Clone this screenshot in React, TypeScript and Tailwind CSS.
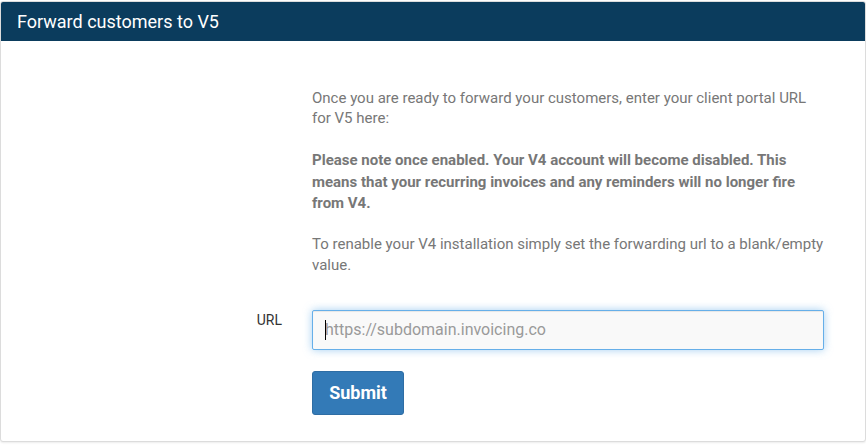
export default function App() {
  return (
    <div className="w-[866px] h-[446px] bg-white pt-[1px]" style={{ fontFamily: 'Roboto, "Liberation Sans", sans-serif' }}>
      <div className="h-[441px] border border-[#dcdcdc] rounded-[3px] shadow-[0_1px_2px_rgba(0,0,0,0.08)] bg-white flex flex-col overflow-hidden">
        <div className="bg-[#0b3c5d] text-white text-[18px] leading-[21px] py-[9px] pl-[16px]">
          Forward customers to V5
        </div>
        <div className="pt-[47px]">
          <div className="ml-[311px] w-[513px] text-[15px] text-[#777777]">
            <p className="leading-[20px]">
              Once you are ready to forward your customers, enter your client portal URL for V5 here:
            </p>
            <p className="leading-[21.5px] font-bold mt-[22px]">
              Please note once enabled. Your V4 account will become disabled. This means that your recurring invoices and any reminders will no longer fire from V4.
            </p>
            <p className="leading-[21.5px] mt-[19px]">
              To renable your V4 installation simply set the forwarding url to a blank/empty value.
            </p>
          </div>
          <div className="flex items-start mt-[33px]">
            <div className="w-[281px] text-right text-[14px] leading-[20px] text-[#333333]">URL</div>
            <div className="ml-[30px] w-[512px]">
              <div className="relative">
                <input
                  type="text"
                  placeholder="https://subdomain.invoicing.co"
                  className="w-full h-[40px] bg-[#f9f9f9] border border-[#66afe9] rounded-[2px] pl-[12px] text-[16px] text-[#555] placeholder:text-[#9a9a9a] outline-none shadow-[inset_0_1px_1px_rgba(0,0,0,0.075),0_0_8px_rgba(102,175,233,0.6)]"
                />
                <span className="absolute left-[13px] top-[10px] w-[1px] h-[20px] bg-black" />
              </div>
              <button className="mt-[21px] w-[92px] h-[44px] bg-[#337ab7] border border-[#2e6da4] rounded-[3px] text-white font-bold text-[18px]">
                Submit
              </button>
            </div>
          </div>
        </div>
      </div>
    </div>
  );
}
